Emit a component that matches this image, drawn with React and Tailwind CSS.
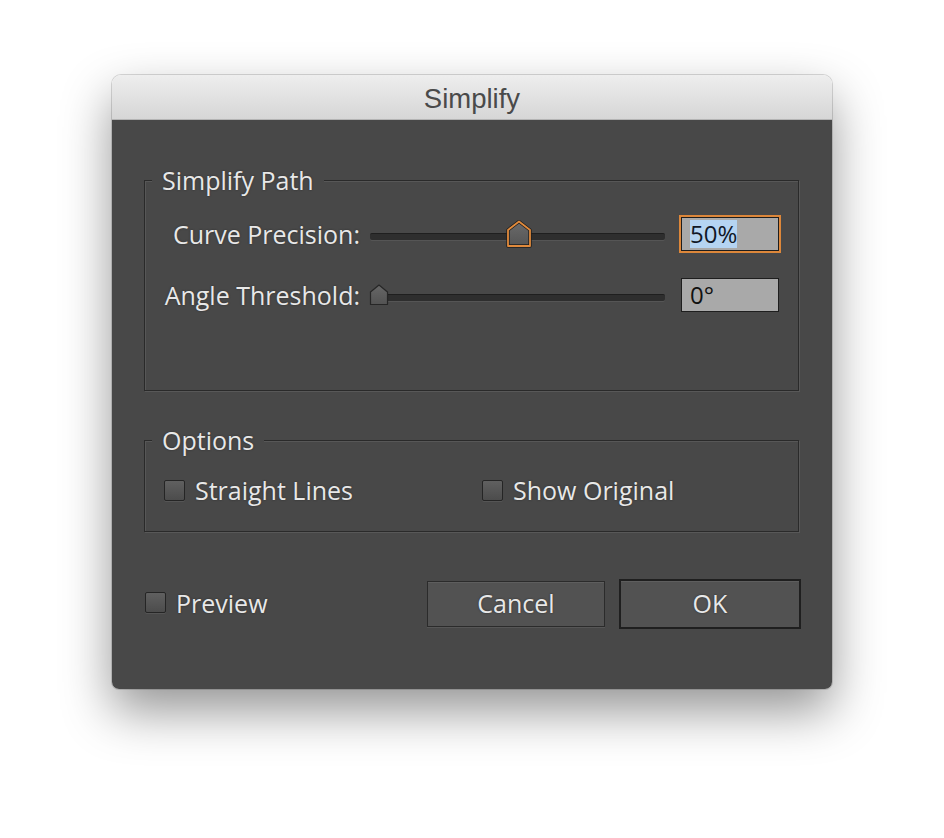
import React from "react";

const font = { fontFamily: '"Open Sans", "Noto Sans", sans-serif' };

function Thumb({ focused }) {
  if (focused) {
    return (
      <svg width="26" height="28" viewBox="0 0 26 28" className="absolute left-[136px] top-[3px]">
        <defs>
          <linearGradient id="tf" x1="0" y1="0" x2="0" y2="1">
            <stop offset="0" stopColor="#6a6a6a" />
            <stop offset="1" stopColor="#555555" />
          </linearGradient>
        </defs>
        <path d="M2 10 L13 1.5 L24 10 L24 26 L2 26 Z" fill="url(#tf)" stroke="#1e1e1e" strokeWidth="3.4" strokeLinejoin="round" />
        <path d="M2 10 L13 1.5 L24 10 L24 26 L2 26 Z" fill="none" stroke="#e08a3c" strokeWidth="1.8" strokeLinejoin="round" />
      </svg>
    );
  }
  return (
    <svg width="20" height="22" viewBox="0 0 20 22" className="absolute -left-[1px] top-[6px]">
      <defs>
        <linearGradient id="tn" x1="0" y1="0" x2="0" y2="1">
          <stop offset="0" stopColor="#676767" />
          <stop offset="1" stopColor="#535353" />
        </linearGradient>
      </defs>
      <path d="M1.5 8 L10 1 L18.5 8 L18.5 20.5 L1.5 20.5 Z" fill="url(#tn)" stroke="#262626" strokeWidth="1.2" strokeLinejoin="round" />
    </svg>
  );
}

function Slider({ focused }) {
  return (
    <div className="relative w-[295px] h-[34px] flex items-center">
      <div className="w-full h-[7px] mt-[4px] rounded-[2px] bg-[#2e2e2e] border-t border-[#1f1f1f] shadow-[0_1px_0_#555555]" />
      <Thumb focused={focused} />
    </div>
  );
}

function Checkbox() {
  return (
    <div className="w-[21px] h-[21px] shrink-0 rounded-[2px] border border-[#252525] bg-gradient-to-b from-[#606060] to-[#4c4c4c] shadow-[0_1px_0_#555555]" />
  );
}

const txt = "text-[25px] text-[#e8e8e8] [text-shadow:0_0_2px_#2a2a2a]";

export default function App() {
  return (
    <div className="w-[944px] h-[838px] bg-white overflow-hidden pt-[75px] pl-[112px]" style={font}>
      <div className="w-[720px] h-[614px] flex flex-col rounded-t-[9px] rounded-b-[7px] overflow-hidden shadow-[0_22px_50px_rgba(0,0,0,0.42),0_0_0_1px_rgba(0,0,0,0.14)]">
        <div className="h-[45px] shrink-0 flex items-center justify-center pt-[3px] bg-gradient-to-b from-[#eeeeee] to-[#d6d6d6] border-b border-[#b4b4b4]">
          <span className="text-[27.5px] text-[#4a4a4a] leading-none" style={{ fontFamily: '"Liberation Sans", Arial, sans-serif' }}>
            Simplify
          </span>
        </div>
        <div className="flex-1 bg-[#484848] pt-[60px] pl-[32px] pr-[33px]">
          {/* Simplify Path group */}
          <div className="h-[211px] border border-[#2a2a2a] shadow-[1px_1px_0_#585858,inset_1px_1px_0_#575757] flex flex-col">
            <div className={`-mt-[16px] ml-[7px] px-[10px] h-[30px] leading-[30px] w-fit bg-[#484848] ${txt}`}>
              Simplify Path
            </div>
            <div className="mt-[22px] h-[34px] flex items-center">
              <div className={`w-[215px] text-right leading-[34px] whitespace-nowrap ${txt}`}>Curve Precision:</div>
              <div className="ml-[10px]">
                <Slider focused />
              </div>
              <div className="ml-[16px] w-[98px] h-[34px] bg-[#a9a9a9] border border-[#1e1e1e] outline-2 outline-[#dd873a] flex items-center pl-[8px]">
                <span className="bg-[#b5d4f2] text-[24px] leading-[28px] text-[#111827]">50%</span>
              </div>
            </div>
            <div className="mt-[27px] h-[34px] flex items-center">
              <div className={`w-[215px] text-right leading-[34px] whitespace-nowrap ${txt}`}>Angle Threshold:</div>
              <div className="ml-[10px]">
                <Slider />
              </div>
              <div className="ml-[16px] w-[98px] h-[34px] bg-[#a9a9a9] border border-[#1e1e1e] flex items-center pl-[8px]">
                <span className="text-[24px] leading-[28px] text-[#111111]">0°</span>
              </div>
            </div>
          </div>

          {/* Options group */}
          <div className="mt-[49px] h-[92px] border border-[#2a2a2a] shadow-[1px_1px_0_#585858,inset_1px_1px_0_#575757] flex flex-col">
            <div className={`-mt-[16px] ml-[7px] px-[10px] h-[30px] leading-[30px] w-fit bg-[#484848] ${txt}`}>
              Options
            </div>
            <div className="mt-[20px] h-[30px] flex items-center pl-[19px]">
              <div className="w-[318px] flex items-center gap-[10px]">
                <Checkbox />
                <span className={`leading-[30px] ${txt}`}>Straight Lines</span>
              </div>
              <div className="flex items-center gap-[10px]">
                <Checkbox />
                <span className={`leading-[30px] ${txt}`}>Show Original</span>
              </div>
            </div>
          </div>

          {/* Bottom row */}
          <div className="mt-[47px] h-[50px] flex items-center -mr-[2px]">
            <div className="ml-[1px] flex items-center gap-[10px] -mt-[3px]">
              <Checkbox />
              <span className={`leading-[30px] ${txt}`}>Preview</span>
            </div>
            <div className="ml-auto flex items-center gap-[14px]">
              <div className={`w-[178px] h-[46px] flex items-center justify-center border border-[#2b2b2b] bg-[#525252] shadow-[inset_0_1px_0_#5e5e5e,0_1px_0_#565656] ${txt}`}>
                Cancel
              </div>
              <div className={`w-[182px] h-[50px] flex items-center justify-center border-2 border-[#1f1f1f] bg-[#525252] shadow-[inset_0_1px_0_#5e5e5e] ${txt}`}>
                OK
              </div>
            </div>
          </div>
        </div>
      </div>
    </div>
  );
}
